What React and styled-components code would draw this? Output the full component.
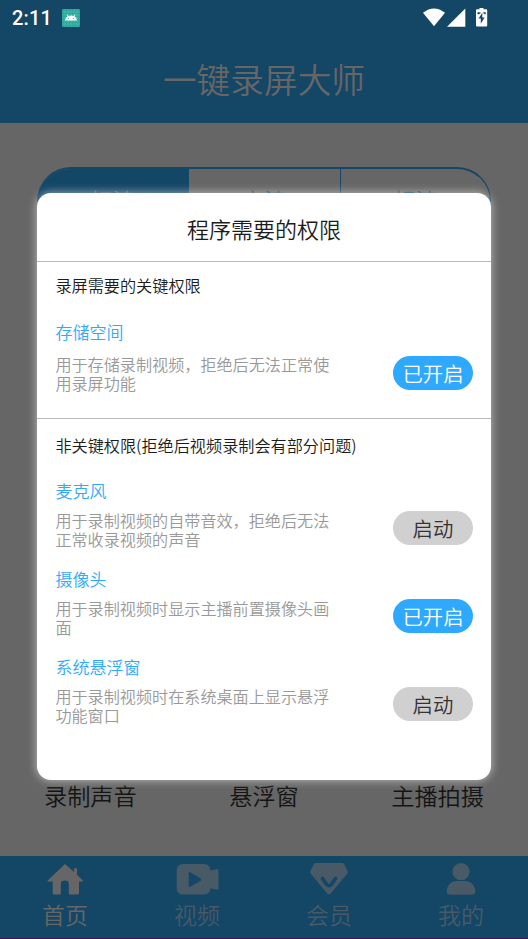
import React from 'react';
import styled, { createGlobalStyle } from 'styled-components';

const GlobalStyle = createGlobalStyle`
    * {
        box-sizing: border-box;
    }

    body {
        margin: 0;
        background-color: #666;
        font-family: "Noto Sans CJK SC", sans-serif;
        font-weight: 350;
        overflow: hidden;
    }
`

const Screen = styled.div`
    position: relative;
    display: flex;
    flex-direction: column;
    width: 528px;
    height: 939px;
    background-color: #666;
    overflow: hidden;
`

const Header = styled.header`
    display: flex;
    flex-direction: column;
    height: 123px;
    background-color: #144666;
`

const StatusBar = styled.div`
    display: flex;
    align-items: center;
    height: 36px;
    padding: 0 40px 0 12px;
    color: #fff;
`

const Clock = styled.span`
    width: 50px;
    font-family: Roboto, sans-serif;
    font-size: 20px;
    font-weight: 500;
    line-height: 36px;
    letter-spacing: 0.2px;
`

const StatusIcons = styled.div`
    display: flex;
    align-items: center;
    margin-left: auto;

    svg {
        display: block;
    }
`

const AppTitle = styled.h1`
    margin: 0;
    padding-top: 18px;
    color: #666;
    font-size: 33.7px;
    font-weight: inherit;
    line-height: 50px;
    text-align: center;
`

const Main = styled.main`
    display: flex;
    flex: 1;
    flex-direction: column;
    justify-content: space-between;
    padding: 44px 37px 43px;
`

const Tabs = styled.div`
    display: flex;
    height: 70px;
    border: 2px solid #144666;
    border-width: 2px 1px 2px 0;
    border-radius: 34px;
    overflow: hidden;
`

const Tab = styled.div`
    flex: 1;
    padding-top: 14px;
    background-color: ${({$active}) => $active ? '#144666' : 'transparent'};
    color: ${({$active}) => $active ? '#666' : '#144666'};
    font-size: 23px;
    line-height: 34px;
    text-align: center;

    &:last-child {
        flex: 0 0 150px;
        border-left: 1px solid #144666;
    }
`

const Features = styled.div`
    display: flex;
    justify-content: space-between;
    padding: 0 7px;
    color: #141414;
    font-size: 23.2px;
    line-height: 36px;
`

const NavBar = styled.nav`
    display: grid;
    grid-template-columns: repeat(4, 1fr);
    height: 83px;
    border-bottom: 1px solid #3d1a55;
    background-color: #144666;
`

const NavItem = styled.div`
    display: flex;
    flex-direction: column;
    align-items: center;
    padding: 6px 2px 0 0;
    color: ${({$active}) => $active ? '#666' : '#475a66'};
    font-size: 23px;
    line-height: 34px;

    svg {
        display: block;
        margin-bottom: 1px;
    }
`

const Dialog = styled.section`
    position: absolute;
    top: 193px;
    left: 37px;
    display: flex;
    flex-direction: column;
    width: 454px;
    height: 587px;
    border-radius: 14px;
    background-color: #fff;
    box-shadow: 0 0 9px 1px rgba(255, 255, 255, 0.5);
`

const DialogTitle = styled.h2`
    height: 69px;
    margin: 0;
    padding-top: 2px;
    border-bottom: 1px solid #b9b9b9;
    color: #1c1c1c;
    font-size: 22px;
    font-weight: inherit;
    line-height: 66px;
    text-align: center;
`

const Group = styled.div`
    height: ${({$height}) => $height};
    padding: ${({$top}) => $top}px 18px 0 18.4px;
    border-bottom: ${({$divided}) => $divided ? '1px solid #b9b9b9' : 'none'};
`

const GroupTitle = styled.h3`
    margin: 0 0 ${({$gap}) => $gap}px;
    color: #1c1c1c;
    font-size: 16.15px;
    font-weight: inherit;
    line-height: 24px;
`

const Permission = styled.div`
    display: flex;
    justify-content: space-between;
    align-items: flex-end;
    height: 88px;
`

const PermissionText = styled.div`
    width: 280px;
    height: 88px;
`

const PermissionName = styled.div`
    margin-bottom: ${({$gap}) => $gap}px;
    color: #2fa9ff;
    font-size: 17px;
    line-height: 24px;
`

const PermissionDescription = styled.div`
    color: #999;
    font-size: 16.12px;
    line-height: 19.3px;
`

const Switch = styled.button`
    width: 80px;
    height: 34px;
    margin-bottom: ${({$bottom}) => $bottom}px;
    padding: 0;
    border: none;
    border-radius: 17px;
    background-color: ${({$on}) => $on ? '#2fa9ff' : '#d0d0d0'};
    color: ${({$on}) => $on ? '#fff' : '#333'};
    font-family: inherit;
    font-size: 20.4px;
    font-weight: inherit;
    line-height: 34px;
`

const AndroidIcon = () => (
    <svg width="18" height="18" viewBox="0 0 18 18">
        <rect width="18" height="18" rx="1" fill="#26a69a" />
        <path d="M3 0v18M6 0v18M9 0v18M12 0v18M15 0v18M0 3h18M0 6h18M0 9h18M0 12h18M0 15h18" stroke="#7ccbc3" strokeWidth="0.35" />
        <path d="M3.2 11.5c.2-2 1.2-3.4 2.4-4.2L4.6 5.6l.6-.3 1.1 1.7c1.6-.7 3.9-.7 5.5 0l1.1-1.7.6.3-1 1.7c1.3.8 2.2 2.2 2.4 4.2z" fill="#fff" />
        <circle cx="6.5" cy="9.5" r="0.6" fill="#26a69a" />
        <circle cx="11.5" cy="9.5" r="0.6" fill="#26a69a" />
    </svg>
)

const SignalIcons = () => (
    <svg width="65" height="20" viewBox="0 0 65 20" fill="#fff">
        <path d="M0 4.7Q11 -3.9 22 4.7L11 18.2z" />
        <path d="M42.3 0.4V18.7H24z" />
        <path fillRule="evenodd" d="M56.5 0h4v1.2h2.7q1 0 1 1v15.2q0 1-1 1h-9.2q-1 0-1-1V2.2q0-1 1-1h2.5zM59.3 4.8 55.6 10.6h2.2v5.2l3.8-6.3h-2.3z" />
        <path d="M54.5 4.2h3v1.2h-1v.8h-2zM62.7 4.2h-2.4v1.2h1v.8h1.4z" fill="#144666" />
    </svg>
)

const HomeIcon = () => (
    <svg width="36" height="34" viewBox="0 0 36 34" fill="currentColor">
        <path d="M18 2 0.7 18.6q-.6 1 .5 1H5.7V31q0 1.5 1.5 1.5h5.6q1 0 1-1V22q0-3.4 4-3.4t4 3.4v9.5q0 1 1 1h7.7q1.5 0 1.5-1.5V19.6h3.3q1.1 0 .5-1L30 12.8V7q0-1-1.5-1T27 7v3z" />
    </svg>
)

const VideoIcon = () => (
    <svg width="43" height="34" viewBox="0 0 43 34" fill="currentColor">
        <path fillRule="evenodd" d="M7 2h21q6 0 6.5 6.5L41 7q1.5 0 1.5 1.5v18q0 1.5-1.5 1.3l-6.5-1.5Q34 32.5 28 32.5H7q-6.3 0-6.3-6.3V8.3Q.7 2 7 2zM12.7 11.5v12q0 2.2 2 1.1l10-6q1.7-1.1 0-2.2l-10-6q-2-1.1-2 1.1z" />
    </svg>
)

const VipIcon = () => (
    <svg width="40" height="34" viewBox="0 0 40 34" fill="currentColor">
        <path d="M6.5 1h27q1 0 1.6.9l3.5 7.2q.7 1.3-.2 2.4L21.7 31.5q-1.7 1.8-3.4 0L1.6 11.5q-.9-1.1-.2-2.4l3.5-7.2Q5.5 1 6.5 1z" />
        <path d="M13.5 16.5l4.2 6q2.3 2.3 4.6 0l4.2-6" fill="none" stroke="#144666" strokeWidth="3.6" strokeLinecap="round" />
    </svg>
)

const UserIcon = () => (
    <svg width="30" height="34" viewBox="0 0 30 34" fill="currentColor">
        <circle cx="15" cy="9.6" r="8.7" />
        <path d="M11 19h8q8 0 10.2 8.5.8 5.2-3 5.2H3.8q-3.8 0-3-5.2Q3 19 11 19z" />
    </svg>
)

const tabs = ['标清', '高清', '超清'];

const features = ['录制声音', '悬浮窗', '主播拍摄'];

const navItems = [
    { label: '首页', Icon: HomeIcon },
    { label: '视频', Icon: VideoIcon },
    { label: '会员', Icon: VipIcon },
    { label: '我的', Icon: UserIcon },
];

const required = [
    { name: '存储空间', text: '用于存储录制视频，拒绝后无法正常使用录屏功能', on: true },
];

const optional = [
    { name: '麦克风', text: '用于录制视频的自带音效，拒绝后无法正常收录视频的声音', on: false },
    { name: '摄像头', text: '用于录制视频时显示主播前置摄像头画面', on: true },
    { name: '系统悬浮窗', text: '用于录制视频时在系统桌面上显示悬浮功能窗口', on: false },
];

const PermissionRow = ({name, text, on, gap, bottom}) => (
    <Permission>
        <PermissionText>
            <PermissionName $gap={gap}>{name}</PermissionName>
            <PermissionDescription>{text}</PermissionDescription>
        </PermissionText>
        <Switch $on={on} $bottom={bottom}>{on ? '已开启' : '启动'}</Switch>
    </Permission>
)

const App = () => (
    <Screen>
        <GlobalStyle />
        <Header>
            <StatusBar>
                <Clock>2:11</Clock>
                <AndroidIcon />
                <StatusIcons>
                    <SignalIcons />
                </StatusIcons>
            </StatusBar>
            <AppTitle>一键录屏大师</AppTitle>
        </Header>
        <Main>
            <Tabs>
                {tabs.map((tab, i) => <Tab key={tab} $active={i === 0}>{tab}</Tab>)}
            </Tabs>
            <Features>
                {features.map(feature => <span key={feature}>{feature}</span>)}
            </Features>
        </Main>
        <NavBar>
            {navItems.map(({label, Icon}, i) => (
                <NavItem key={label} $active={i === 0}>
                    <Icon />
                    {label}
                </NavItem>
            ))}
        </NavBar>
        <Dialog>
            <DialogTitle>程序需要的权限</DialogTitle>
            <Group $height="157px" $top={11} $divided>
                <GroupTitle $gap={23}>录屏需要的关键权限</GroupTitle>
                {required.map(item => <PermissionRow key={item.name} {...item} gap={11} bottom={18} />)}
            </Group>
            <Group $height="361px" $top={14}>
                <GroupTitle $gap={22}>非关键权限(拒绝后视频录制会有部分问题)</GroupTitle>
                {optional.map(item => <PermissionRow key={item.name} {...item} gap={8} bottom={22} />)}
            </Group>
        </Dialog>
    </Screen>
)

export default App
